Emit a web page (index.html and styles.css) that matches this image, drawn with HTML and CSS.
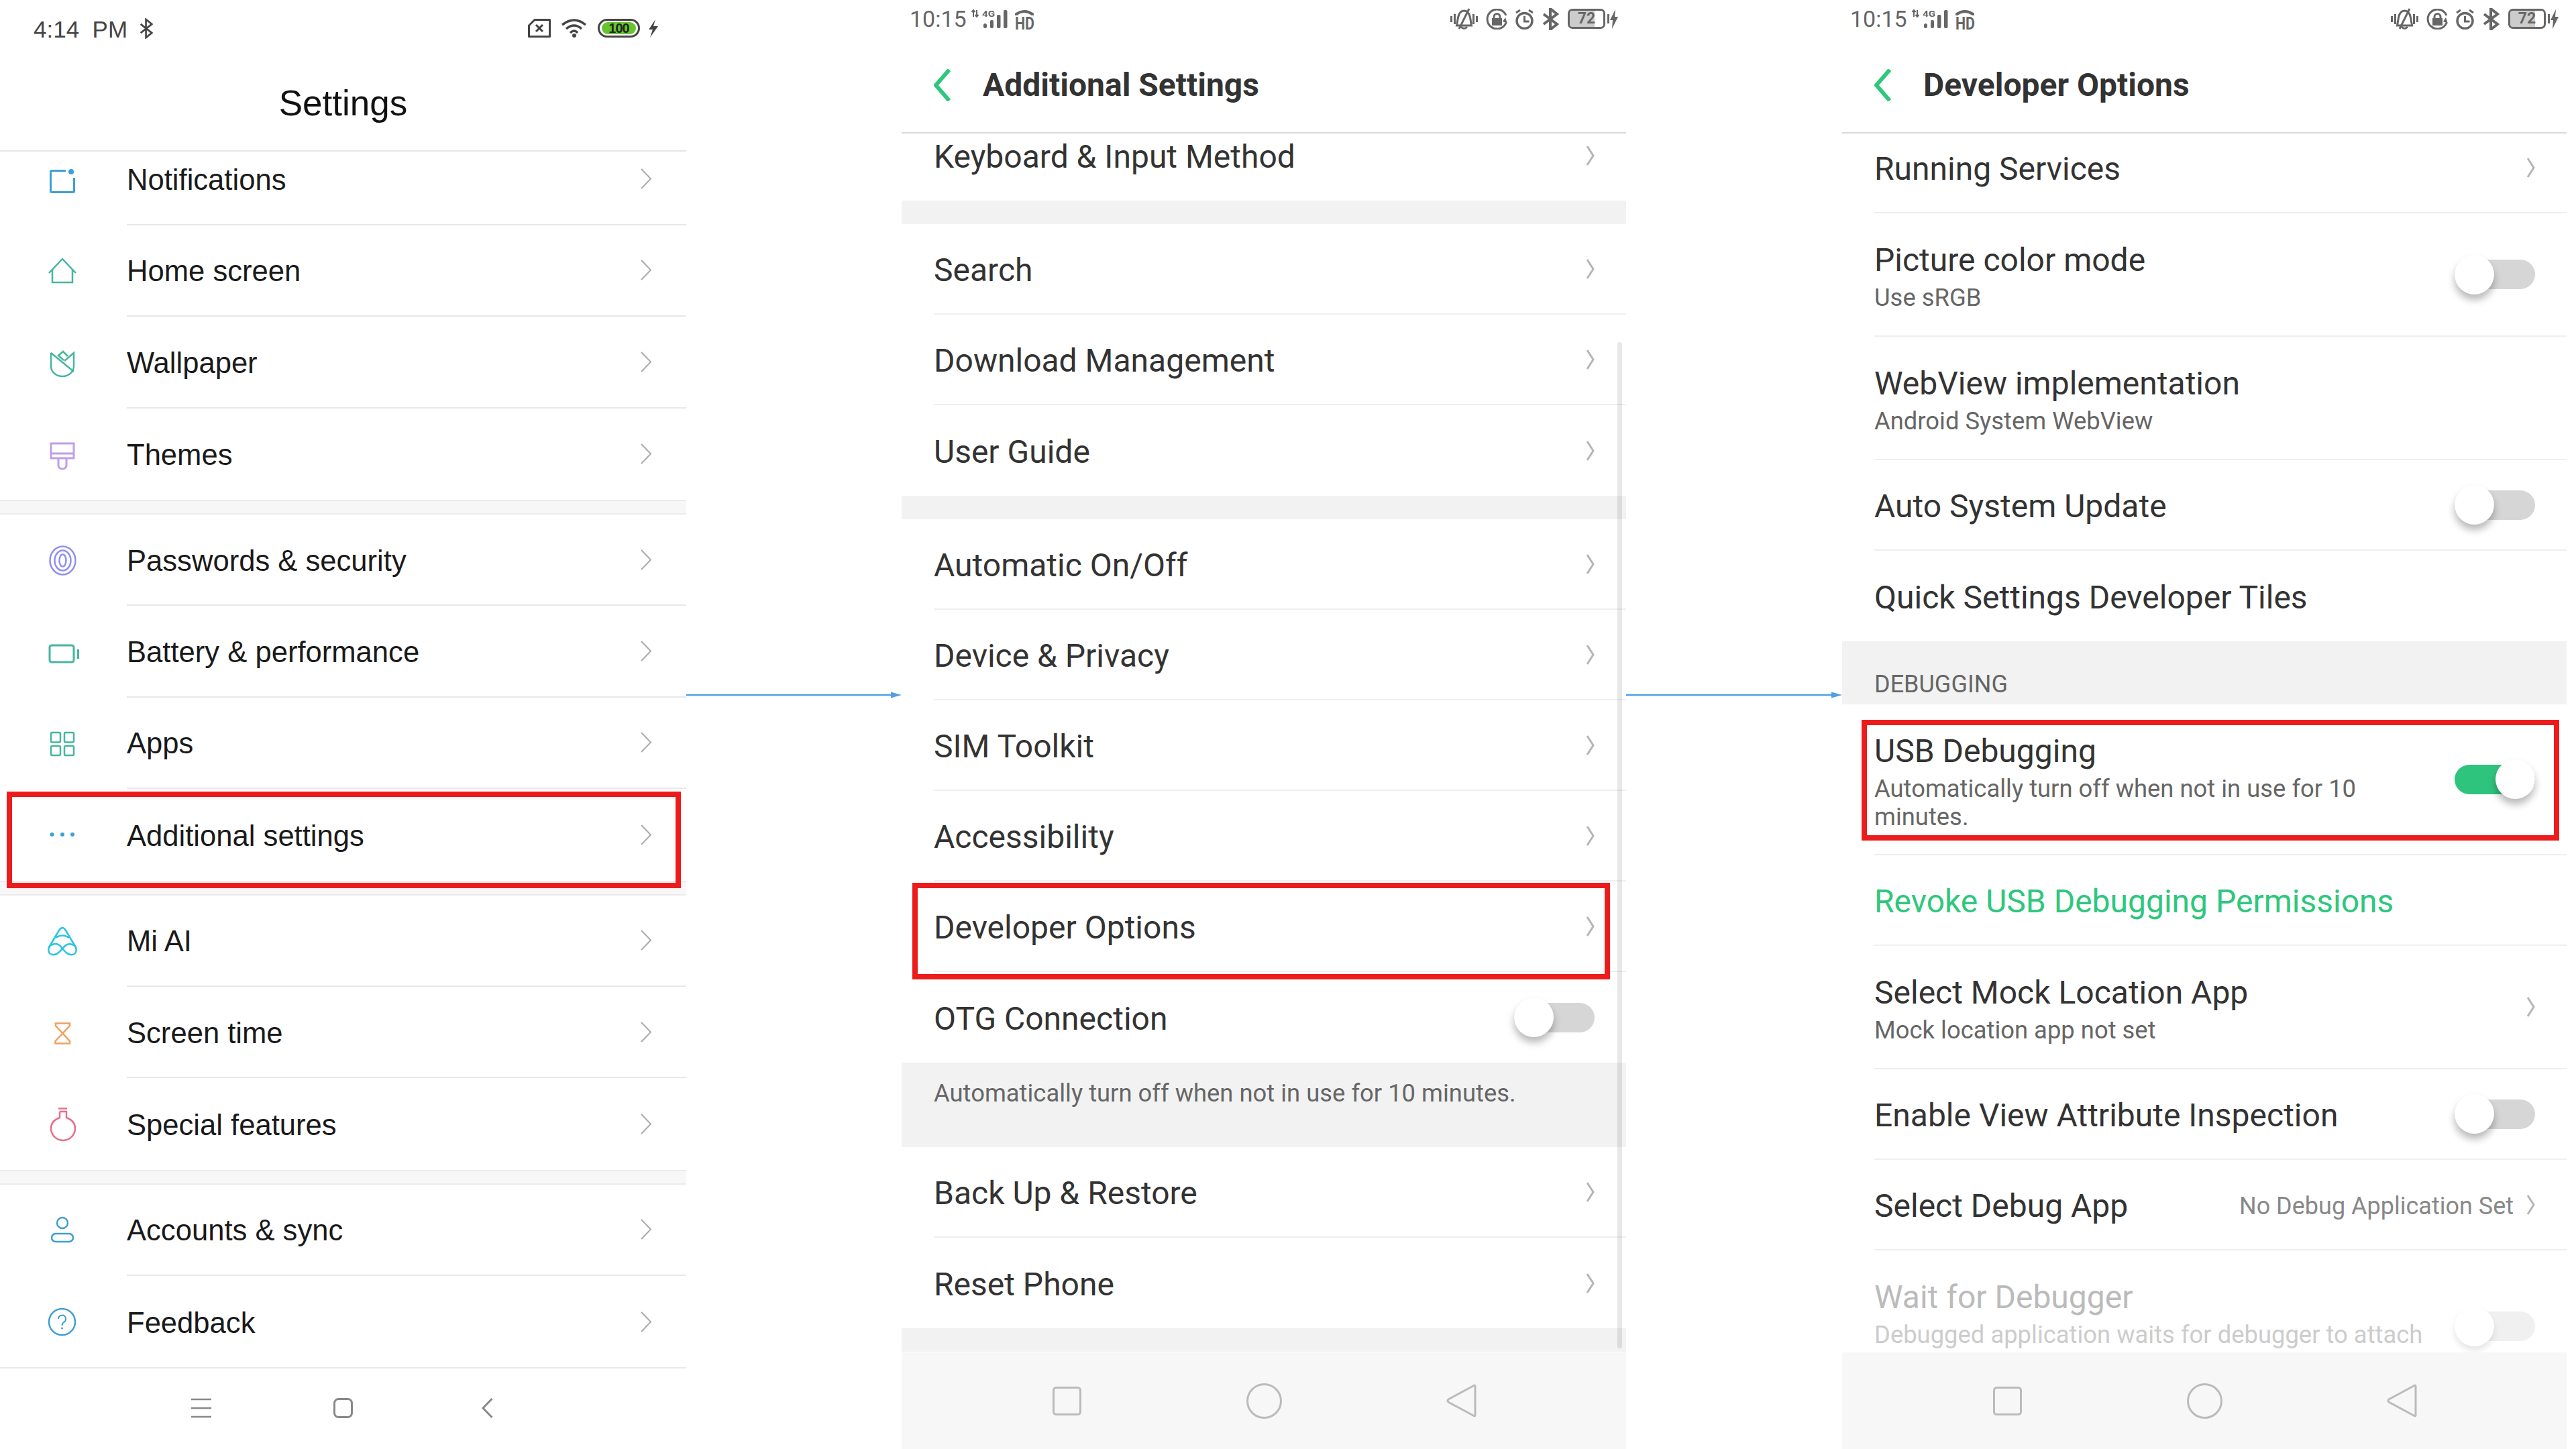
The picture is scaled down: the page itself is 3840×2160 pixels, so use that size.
FILE: index.html
```html
<!DOCTYPE html>
<html lang="en">
<head>
<meta charset="utf-8">
<title>Enable USB debugging</title>
<link rel="stylesheet" href="styles.css">
</head>
<body>
<svg class="defs" aria-hidden="true">
  <symbol id="chev1" viewBox="0 0 18 31"><path d="M2 1 16 15.5 2 30" fill="none" stroke="currentColor" stroke-width="2"/></symbol>
  <symbol id="chev2" viewBox="0 0 13 30"><path d="M2 1 11 15 2 29" fill="none" stroke="currentColor" stroke-width="3"/></symbol>
  <symbol id="bell" viewBox="0 0 41 33"><g fill="none" stroke="currentColor" stroke-width="3"><path d="M1.5 12v9M6.5 9v15M34.5 9v15M39.5 12v9"/><path d="M20.5 4c-6 0-8 5-9 10l-2 12h22l-2-12c-1-5-3-10-9-10z"/><path d="M28 1 13 31"/><path d="M16 28q4.500 5 9 0"/></g></symbol>
  <symbol id="lock" viewBox="0 0 33 31"><path d="M30 10A14.500 14.500 0 1 0 30 21" fill="none" stroke="currentColor" stroke-width="3"/><path d="M29 13l3 9-7-3z" fill="currentColor"/><rect x="9" y="14" width="15" height="11" fill="currentColor"/><path d="M12 15v-3a4.500 4.500 0 0 1 9 0v3" fill="none" stroke="currentColor" stroke-width="3"/></symbol>
  <symbol id="alarm" viewBox="0 0 29 31"><g fill="none" stroke="currentColor" stroke-width="3.500"><circle cx="14.500" cy="18" r="11.500"/><path d="M14.500 11v8h7" stroke-width="3"/><path d="M2 6l6-4M27 6l-6-4" stroke-width="3"/></g></symbol>
  <symbol id="bt" viewBox="0 0 25 33"><path d="M2 9 22 24 12 32V1L22 9 2 24" fill="none" stroke="currentColor" stroke-width="4"/></symbol>
  <symbol id="bolt2" viewBox="0 0 12 29"><path d="M8 0 0 16h4L3 29 12 11H7z" fill="currentColor"/></symbol>
  <symbol id="signal" viewBox="0 0 96 34">
    <path class="sig-arrow" d="M5 4v10M2.500 7 5 4l2.500 3M10 14V4M7.500 11l2.500 3 2.500-3" fill="none" stroke="currentColor" stroke-width="2"/>
    <g fill="currentColor"><rect x="20" y="24" width="5" height="7" rx="2.500"/><rect x="30" y="19" width="5" height="12" rx="2"/><rect x="40" y="11" width="5.500" height="20" rx="2"/><rect x="50" y="4" width="5.500" height="27" rx="2"/></g>
    <path d="M69 12v-2q12-8 24 0v2" fill="none" stroke="currentColor" stroke-width="4"/>
  </symbol>
</svg>
<main class="board">

<section class="phone miui">
  <div class="status">
    <div class="status-left"><span class="time">4:14&nbsp; PM</span>
      <svg class="i-bt" viewBox="0 0 25 33"><path d="M3 9 22 24 12 32V1L22 9 3 24" fill="none" stroke="currentColor" stroke-width="3"/></svg></div>
    <div class="status-right">
      <svg class="i-sim" viewBox="0 0 34 28"><path d="M10 1.500H32.500V26.500H1.500V10Z M12 9 22 19M22 9 12 19" fill="none" stroke="currentColor" stroke-width="3" stroke-linejoin="round"/></svg>
      <svg class="i-wifi" viewBox="0 0 39 28"><g fill="none" stroke="currentColor" stroke-width="3.500"><path d="M2 9Q20-5 37 9"/><path d="M8 15Q20 5 31 15"/><path d="M14 21Q20 15 25 21"/></g><circle cx="20" cy="25" r="3" fill="currentColor"/></svg>
      <div class="batt-m"><span class="batt-m-fill">100</span></div>
      <svg class="i-bolt" viewBox="0 0 17 27"><path d="M12 0 2 15H8L4 27 16 10H9Z" fill="currentColor"/></svg>
    </div>
  </div>
  <header class="m-head"><h1>Settings</h1></header>
  <div class="m-list">
    <div class="m-row m-first">
      <svg class="m-ic blue" viewBox="0 0 50 50"><path d="M30 11.500H9a1.500 1.500 0 0 0-1.500 1.500v29a1.500 1.500 0 0 0 1.500 1.500h32a1.500 1.500 0 0 0 1.500-1.500V22" fill="none" stroke="currentColor" stroke-width="3"/><circle cx="38" cy="13" r="4" fill="currentColor"/></svg>
      <div class="m-body"><span class="m-label">Notifications</span><svg class="chev1"><use href="#chev1"/></svg></div>
    </div>
    <div class="m-row">
      <svg class="m-ic teal" viewBox="0 0 50 50"><path d="M5 28 25 7 45 28M10 23V42H40V23" fill="none" stroke="currentColor" stroke-width="2.500"/></svg>
      <div class="m-body"><span class="m-label">Home screen</span><svg class="chev1"><use href="#chev1"/></svg></div>
    </div>
    <div class="m-row">
      <svg class="m-ic teal" viewBox="0 0 50 50"><path d="M8 11V31a17 15 0 0 0 34 0V11L28 23M8 11 42 39M27 22 19 15 26 9 33 16" fill="none" stroke="currentColor" stroke-width="2.500"/></svg>
      <div class="m-body"><span class="m-label">Wallpaper</span><svg class="chev1"><use href="#chev1"/></svg></div>
    </div>
    <div class="m-row m-last">
      <svg class="m-ic purple" viewBox="0 0 50 50"><path d="M8 9H42V31H8ZM8 24H42M19 31V42a6 5 0 0 0 12 0V31" fill="none" stroke="currentColor" stroke-width="3"/></svg>
      <div class="m-body"><span class="m-label">Themes</span><svg class="chev1"><use href="#chev1"/></svg></div>
    </div>
    <div class="m-gap"></div>
    <div class="m-row">
      <svg class="m-ic violet" viewBox="0 0 50 50"><g fill="none" stroke="currentColor" stroke-width="2.500"><ellipse cx="25.500" cy="25.500" rx="19" ry="21"/><ellipse cx="25.500" cy="25.500" rx="12" ry="15"/><ellipse cx="25.500" cy="25.500" rx="5" ry="9"/></g></svg>
      <div class="m-body"><span class="m-label">Passwords &amp; security</span><svg class="chev1"><use href="#chev1"/></svg></div>
    </div>
    <div class="m-row">
      <svg class="m-ic teal" viewBox="0 0 50 50"><rect x="6" y="15" width="36" height="25" rx="3" fill="none" stroke="currentColor" stroke-width="3"/><path d="M48.500 21V35" stroke="currentColor" stroke-width="3"/></svg>
      <div class="m-body"><span class="m-label">Battery &amp; performance</span><svg class="chev1"><use href="#chev1"/></svg></div>
    </div>
    <div class="m-row">
      <svg class="m-ic teal" viewBox="0 0 50 50"><g fill="none" stroke="currentColor" stroke-width="2.500"><rect x="8" y="9" width="14" height="14.500" rx="2"/><rect x="28" y="9" width="14" height="14.500" rx="2"/><rect x="8" y="29" width="14" height="14" rx="2"/><rect x="28" y="29" width="14" height="14" rx="2"/></g></svg>
      <div class="m-body"><span class="m-label">Apps</span><svg class="chev1"><use href="#chev1"/></svg></div>
    </div>
    <div class="m-row m-last">
      <svg class="m-ic blue" viewBox="0 0 50 50"><g fill="currentColor"><circle cx="9.500" cy="25" r="3"/><circle cx="25" cy="25" r="3"/><circle cx="40" cy="25" r="3"/></g></svg>
      <div class="m-body"><span class="m-label">Additional settings</span><svg class="chev1"><use href="#chev1"/></svg></div>
    </div>
    <div class="m-gap"></div>
    <div class="m-row">
      <svg class="m-ic cyan" viewBox="0 0 50 50"><g fill="none" stroke="currentColor" stroke-width="2.500"><path d="M5 34 20 9Q25 1 30 9L45 34"/><path d="M25 36C20 28 15 28 10 30 3 32 2 44 10 45 16 46 20 42 25 36 30 30 34 28 40 30 47 32 48 44 40 45 34 46 30 42 25 36Z"/><path d="M15 20Q25 13 35 20"/></g></svg>
      <div class="m-body"><span class="m-label">Mi AI</span><svg class="chev1"><use href="#chev1"/></svg></div>
    </div>
    <div class="m-row">
      <svg class="m-ic orange" viewBox="0 0 50 50"><path d="M13.500 11.500H37.500M15 11.500V15L36 38V41.500H14.500V38L36 15V11.500M14.500 41.500H37" fill="none" stroke="currentColor" stroke-width="2.500"/></svg>
      <div class="m-body"><span class="m-label">Screen time</span><svg class="chev1"><use href="#chev1"/></svg></div>
    </div>
    <div class="m-row m-last">
      <svg class="m-ic rose" viewBox="0 0 50 50"><path d="M19 1.500H32M21 6V15C13 18 8 23 8 31A18 18 0 0 0 44 31C44 23 39 18 31 15V6H21" fill="none" stroke="currentColor" stroke-width="2.500"/></svg>
      <div class="m-body"><span class="m-label">Special features</span><svg class="chev1"><use href="#chev1"/></svg></div>
    </div>
    <div class="m-gap"></div>
    <div class="m-row">
      <svg class="m-ic blue" viewBox="0 0 50 50"><circle cx="25" cy="14" r="8" fill="none" stroke="currentColor" stroke-width="2.500"/><rect x="9" y="30" width="32" height="12" rx="6" fill="none" stroke="currentColor" stroke-width="2.500"/></svg>
      <div class="m-body"><span class="m-label">Accounts &amp; sync</span><svg class="chev1"><use href="#chev1"/></svg></div>
    </div>
    <div class="m-row m-last">
      <svg class="m-ic blue" viewBox="0 0 50 50"><circle cx="24.500" cy="25.500" r="19.500" fill="none" stroke="currentColor" stroke-width="2.500"/><path d="M19 21a5.500 5.500 0 1 1 8 5c-2 1.300-2.500 2.500-2.500 5" fill="none" stroke="currentColor" stroke-width="2"/><circle cx="24.500" cy="35" r="1.500" fill="currentColor"/></svg>
      <div class="m-body"><span class="m-label">Feedback</span><svg class="chev1"><use href="#chev1"/></svg></div>
    </div>
  </div>
  <nav class="m-nav">
    <svg class="mn-menu" viewBox="0 0 30 30"><path d="M0 2H30M0 15H30M0 28H30" stroke="currentColor" stroke-width="2.500"/></svg>
    <svg class="mn-home" viewBox="0 0 29 30"><rect x="1.500" y="1.500" width="26" height="27" rx="6" fill="none" stroke="currentColor" stroke-width="3"/></svg>
    <svg class="mn-back" viewBox="0 0 17 30"><path d="M15.500 1 2 15 15.500 29" fill="none" stroke="currentColor" stroke-width="3"/></svg>
  </nav>
  <div class="redbox red-a"></div>
</section>

<div class="arrow"><svg viewBox="0 0 321 12"><path d="M0 6H308" stroke="#4f9fe6" stroke-width="2.500"/><path d="M305 1.500 321 6 305 10.500Z" fill="#4f9fe6"/></svg></div>

<section class="phone oppo">
  <div class="o-status">
    <div class="o-left"><span class="o-time">10:15</span>
      <svg class="o-signal"><g transform="translate(0 5)"><use href="#signal" width="96" height="34"/><text class="t-4g" x="18" y="14" textLength="19" lengthAdjust="spacingAndGlyphs">4G</text><text class="t-hd" x="67" y="33" textLength="29" lengthAdjust="spacingAndGlyphs">HD</text></g></svg></div>
    <div class="o-right">
      <svg class="o-bell"><use href="#bell"/></svg><svg class="o-lock"><use href="#lock"/></svg><svg class="o-alarm"><use href="#alarm"/></svg><svg class="o-bt"><use href="#bt"/></svg>
      <div class="o-batt">72</div><svg class="o-bolt"><use href="#bolt2"/></svg>
    </div>
  </div>
  <header class="o-head">
    <svg class="o-backic" viewBox="0 0 25 48"><path d="M23 1 3 24 23 47" fill="none" stroke="currentColor" stroke-width="6"/></svg>
    <h2>Additional Settings</h2>
  </header>
  <div class="o-list">
    <div class="o-row o-first o-last"><span class="o-label">Keyboard &amp; Input Method</span><svg class="chev2"><use href="#chev2"/></svg></div>
    <div class="o-gap"></div>
    <div class="o-row"><span class="o-label">Search</span><svg class="chev2"><use href="#chev2"/></svg></div>
    <div class="o-row"><span class="o-label">Download Management</span><svg class="chev2"><use href="#chev2"/></svg></div>
    <div class="o-row o-last"><span class="o-label">User Guide</span><svg class="chev2"><use href="#chev2"/></svg></div>
    <div class="o-gap"></div>
    <div class="o-row"><span class="o-label">Automatic On/Off</span><svg class="chev2"><use href="#chev2"/></svg></div>
    <div class="o-row"><span class="o-label">Device &amp; Privacy</span><svg class="chev2"><use href="#chev2"/></svg></div>
    <div class="o-row"><span class="o-label">SIM Toolkit</span><svg class="chev2"><use href="#chev2"/></svg></div>
    <div class="o-row"><span class="o-label">Accessibility</span><svg class="chev2"><use href="#chev2"/></svg></div>
    <div class="o-row"><span class="o-label">Developer Options</span><svg class="chev2"><use href="#chev2"/></svg></div>
    <div class="o-row o-last"><span class="o-label">OTG Connection</span><div class="toggle"></div></div>
    <div class="o-note">Automatically turn off when not in use for 10 minutes.</div>
    <div class="o-row"><span class="o-label">Back Up &amp; Restore</span><svg class="chev2"><use href="#chev2"/></svg></div>
    <div class="o-row o-last"><span class="o-label">Reset Phone</span><svg class="chev2"><use href="#chev2"/></svg></div>
    <div class="o-gap"></div>
  </div>
  <nav class="o-nav">
    <svg class="on-sq" viewBox="0 0 43 43"><rect x="1.500" y="1.500" width="40" height="40" rx="4" fill="none" stroke="currentColor" stroke-width="3"/></svg>
    <svg class="on-ci" viewBox="0 0 53 53"><circle cx="26.500" cy="26.500" r="25" fill="none" stroke="currentColor" stroke-width="3"/></svg>
    <svg class="on-tr" viewBox="0 0 45 50"><path d="M43 3.500V46.500Q43 49 40 47L3 27Q1 25 3 23L40 3Q43 1 43 3.500Z" fill="none" stroke="currentColor" stroke-width="3"/></svg>
  </nav>
  <div class="scrollbar"></div>
  <div class="redbox red-b"></div>
</section>

<div class="arrow arrow-b"><svg viewBox="0 0 322 12"><path d="M0 6H309" stroke="#4f9fe6" stroke-width="2.500"/><path d="M306 1.500 322 6 306 10.500Z" fill="#4f9fe6"/></svg></div>

<section class="phone oppo">
  <div class="o-status">
    <div class="o-left"><span class="o-time">10:15</span>
      <svg class="o-signal sig-dim"><g transform="translate(0 5)"><use href="#signal" width="96" height="34"/><text class="t-4g" x="18" y="14" textLength="19" lengthAdjust="spacingAndGlyphs">4G</text><text class="t-hd" x="67" y="33" textLength="29" lengthAdjust="spacingAndGlyphs">HD</text></g></svg></div>
    <div class="o-right">
      <svg class="o-bell"><use href="#bell"/></svg><svg class="o-lock"><use href="#lock"/></svg><svg class="o-alarm"><use href="#alarm"/></svg><svg class="o-bt"><use href="#bt"/></svg>
      <div class="o-batt">72</div><svg class="o-bolt"><use href="#bolt2"/></svg>
    </div>
  </div>
  <header class="o-head">
    <svg class="o-backic" viewBox="0 0 25 48"><path d="M23 1 3 24 23 47" fill="none" stroke="currentColor" stroke-width="6"/></svg>
    <h2>Developer Options</h2>
  </header>
  <div class="o-list">
    <div class="o-row d-short"><span class="o-label">Running Services</span><svg class="chev2"><use href="#chev2"/></svg></div>
    <div class="o-row d-two"><div class="d-text"><div class="o-label">Picture color mode</div><div class="d-sub">Use sRGB</div></div><div class="toggle"></div></div>
    <div class="o-row d-two"><div class="d-text"><div class="o-label">WebView implementation</div><div class="d-sub">Android System WebView</div></div></div>
    <div class="o-row"><span class="o-label">Auto System Update</span><div class="toggle"></div></div>
    <div class="o-row o-last"><span class="o-label">Quick Settings Developer Tiles</span></div>
    <div class="d-cap">DEBUGGING</div>
    <div class="o-row d-usb"><div class="d-text"><div class="o-label">USB Debugging</div><div class="d-sub">Automatically turn off when not in use for 10 minutes.</div></div><div class="toggle on"></div></div>
    <div class="o-row"><span class="o-label d-green">Revoke USB Debugging Permissions</span></div>
    <div class="o-row d-two"><div class="d-text"><div class="o-label">Select Mock Location App</div><div class="d-sub">Mock location app not set</div></div><svg class="chev2"><use href="#chev2"/></svg></div>
    <div class="o-row"><span class="o-label">Enable View Attribute Inspection</span><div class="toggle"></div></div>
    <div class="o-row"><span class="o-label">Select Debug App</span><span class="d-value">No Debug Application Set</span><svg class="chev2"><use href="#chev2"/></svg></div>
    <div class="o-row d-wait o-last"><div class="d-text"><div class="o-label">Wait for Debugger</div><div class="d-sub">Debugged application waits for debugger to attach</div></div><div class="toggle off-dim"></div></div>
  </div>
  <nav class="o-nav">
    <svg class="on-sq" viewBox="0 0 43 43"><rect x="1.500" y="1.500" width="40" height="40" rx="4" fill="none" stroke="currentColor" stroke-width="3"/></svg>
    <svg class="on-ci" viewBox="0 0 53 53"><circle cx="26.500" cy="26.500" r="25" fill="none" stroke="currentColor" stroke-width="3"/></svg>
    <svg class="on-tr" viewBox="0 0 45 50"><path d="M43 3.500V46.500Q43 49 40 47L3 27Q1 25 3 23L40 3Q43 1 43 3.500Z" fill="none" stroke="currentColor" stroke-width="3"/></svg>
  </nav>
  <div class="redbox red-c"></div>
</section>

</main>
</body>
</html>
```

FILE: styles.css
```css
* { box-sizing: border-box; }
html, body { margin: 0; padding: 0; background: #fff; }
.defs { display: none; }
.board { display: flex; width: 3840px; height: 2160px; overflow: hidden; background: #fff; }
.phone { position: relative; display: flex; flex-direction: column; height: 2160px; flex: none; background: #fff; }
.redbox { position: absolute; border: 8px solid #ed1c1c; pointer-events: none; }
.red-a { left: 10px; top: 1180px; width: 1005px; height: 144px; }
.red-b { left: 16px; top: 1316px; width: 1040px; height: 144px; }
.red-c { left: 29px; top: 1073px; width: 1040px; height: 180px; }
.arrow { flex: none; width: 321px; height: 12px; margin-top: 1030px; }
.arrow-b { width: 322px; }
.arrow svg { display: block; width: 100%; height: 12px; }

/* MIUI phone */
.miui { width: 1023px; font-family: "Liberation Sans", Arial, sans-serif; }
.status { flex: none; height: 84px; display: flex; align-items: center; justify-content: space-between; padding: 0 41px 0 50px; color: #444; }
.status-left { display: flex; align-items: center; gap: 17px; }
.time { font-size: 35px; margin-top: 4px; }
.i-bt { width: 22px; height: 31px; }
.status-right { display: flex; align-items: center; }
.i-sim { width: 34px; height: 28px; }
.i-wifi { width: 39px; height: 28px; margin-left: 15px; }
.batt-m { width: 63px; height: 28px; margin-left: 16px; border: 3px solid #444; border-radius: 14px; padding: 2px 3px; display: flex; }
.batt-m-fill { flex: 1; background: #66c52d; border-radius: 9px; color: #222; font-size: 20px; font-weight: 700; line-height: 18px; text-align: center; letter-spacing: -1px; }
.i-bolt { width: 17px; height: 27px; margin-left: 11px; }
.m-head { flex: none; height: 142px; padding-bottom: 2px; display: flex; align-items: center; justify-content: center; border-bottom: 2px solid #e6e6e6; }
.m-head h1 { margin: 0; font-size: 53px; font-weight: 400; color: #111; }
.m-list { flex: none; height: 1811.6px; overflow: hidden; }
.m-row { height: 136.4px; display: flex; align-items: stretch; padding-left: 68px; }
.m-first { margin-top: -26.6px; }
.m-ic { flex: none; width: 50px; height: 50px; align-self: center; margin-right: 71px; overflow: visible; }
.m-body { flex: 1; display: flex; align-items: center; justify-content: space-between; padding-right: 51px; border-bottom: 2px solid #e8e8e8; }
.m-last .m-body { border-bottom: 0; }
.m-label { font-size: 43.6px; color: #1a1a1a; position: relative; top: 2px; }
.chev1 { width: 18px; height: 31px; color: #aaa; }
.m-gap { height: 22px; background: #f7f7f7; border-top: 2px solid #ebebeb; border-bottom: 2px solid #ebebeb; }
.m-nav { flex: 1; display: flex; align-items: center; padding: 0 0 2px 285px; border-top: 2px solid #e8e8e8; color: #888; }
.mn-menu { width: 30px; height: 30px; }
.mn-home { width: 29px; height: 30px; margin-left: 182px; }
.mn-back { width: 17px; height: 30px; margin-left: 192px; }
.blue { color: #3d9fd6; }
.teal { color: #45b5a0; }
.purple { color: #bf9fe6; }
.violet { color: #8f8fef; }
.cyan { color: #2bc4e0; }
.orange { color: #f0a060; }
.rose { color: #e5708a; }

/* ColorOS phones */
.oppo { width: 1080px; font-family: Roboto, "Liberation Sans", sans-serif; }
.o-status { flex: none; height: 56px; display: flex; align-items: center; justify-content: space-between; padding: 0 12px 0 12px; color: #666; }
.o-left { display: flex; align-items: center; }
.o-time { font-size: 34px; }
.o-signal { width: 110px; height: 44px; margin-left: 5px; }
.t-4g { font-family: Roboto, sans-serif; font-size: 13.5px; font-weight: 700; fill: #666; }
.t-hd { font-family: Roboto, sans-serif; font-size: 25px; font-weight: 700; fill: #666; }
.o-right { display: flex; align-items: center; gap: 12px; }
.o-bell { width: 41px; height: 33px; }
.o-lock { width: 33px; height: 31px; }
.o-alarm { width: 29px; height: 31px; margin-left: -2px; }
.o-bt { width: 25px; height: 33px; }
.o-batt { position: relative; width: 56px; height: 30px; margin-left: 1px; border: 3px solid #666; border-radius: 7px; font-size: 23px; font-weight: 700; line-height: 24px; text-align: center; color: #666; background: linear-gradient(90deg, #ccc 74%, transparent 74%) padding-box; }
.o-batt::after { content: ""; position: absolute; right: -9px; top: 5px; width: 3px; height: 14px; background: #666; }
.o-bolt { width: 12px; height: 29px; margin-left: -5px; }
.o-head { flex: none; height: 143px; display: flex; align-items: center; padding-left: 48px; border-bottom: 2px solid #d8d8d8; }
.o-backic { width: 25px; height: 48px; color: #2ec77d; margin-right: 48px; }
.o-head h2 { margin: 0; font-size: 48px; font-weight: 700; color: #333; }
.o-list { flex: none; height: 1817px; overflow: hidden; }
.o-row { position: relative; display: flex; align-items: center; height: 135px; margin-left: 48px; padding: 0 47px 0 0; border-bottom: 2px solid #efefef; }
.o-last { border-bottom: 0; }
.o-first { margin-top: -35px; }
.o-label { position: relative; top: 2px; font-size: 48px; line-height: 54px; color: #333; flex: 1; }
.chev2 { width: 13px; height: 30px; color: #b5b5b5; flex: none; }
.o-gap { height: 35px; background: #f2f2f2; }
.o-note { height: 126px; padding: 25px 0 0 48px; background: #f2f2f2; font-size: 36.4px; line-height: 42px; color: #666; }
.o-nav { flex: 1; display: flex; align-items: center; padding-left: 225px; background: #f7f7f7; color: #bbb; }
.on-sq { width: 43px; height: 43px; }
.on-ci { width: 53px; height: 53px; margin-left: 246px; }
.on-tr { width: 45px; height: 50px; margin-left: 245px; }
.scrollbar { position: absolute; left: 1067px; top: 510px; width: 7px; height: 1500px; border-radius: 4px; background: rgba(0, 0, 0, .09); }
.toggle { position: relative; flex: none; width: 120px; height: 44px; border-radius: 22px; background: #d6d6d6; }
.toggle::after { content: ""; position: absolute; left: 0; top: -7.500px; width: 59px; height: 59px; border-radius: 50%; background: #fff; box-shadow: 0 8px 12px rgba(0, 0, 0, .28); }
.toggle.on { background: #2fc47e; }
.toggle.on::after { left: 61px; }
.toggle.off-dim { background: #f0f0f0; }
.toggle.off-dim::after { box-shadow: 0 6px 10px rgba(0, 0, 0, .1); }
.d-short { margin-top: -16px; }
.d-two { height: 184px; align-items: flex-start; }
.d-two .toggle, .d-two .chev2 { align-self: center; }
.d-text { flex: 1; padding-top: 41.5px; }
.d-text .o-label { top: 1px; }
.d-sub { position: relative; top: 1px; margin-top: 8px; font-size: 36.4px; line-height: 42px; color: #666; }
.d-usb { height: 225px; align-items: flex-start; }
.d-usb .toggle { align-self: center; }
.d-usb .d-sub { width: 760px; }
.d-cap { height: 94px; display: flex; align-items: flex-end; padding: 0 0 9px 48px; background: #f2f2f2; font-size: 36px; line-height: 42px; color: #666; }
.d-green { color: #2ec77d; }
.d-value { position: relative; top: 2px; font-size: 36px; color: #888; margin-right: 19px; }
.d-wait { height: 226px; align-items: flex-start; }
.d-wait .toggle { align-self: center; }
.d-wait .o-label { color: #bbb; }
.d-wait .d-sub { color: #ccc; }
.sig-dim .sig-arrow { opacity: .4; }
```
